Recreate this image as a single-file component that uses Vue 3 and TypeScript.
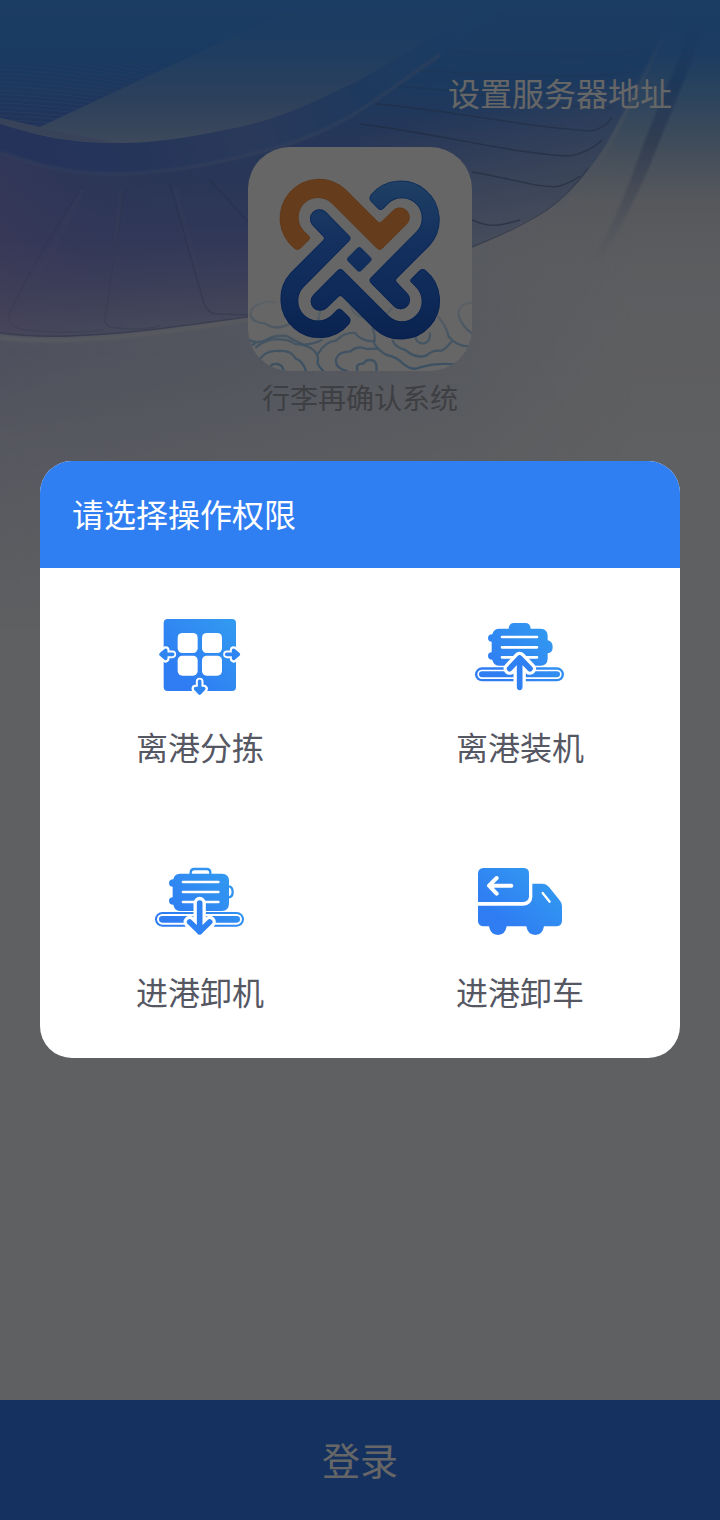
<script setup lang="ts">
type IconName = 'sort' | 'load' | 'unload' | 'truck'

interface Permission {
  icon: IconName
  label: string
}

const permissions: Permission[] = [
  { icon: 'sort', label: '离港分拣' },
  { icon: 'load', label: '离港装机' },
  { icon: 'unload', label: '进港卸机' },
  { icon: 'truck', label: '进港卸车' },
]

const meshLines: string[] = Array.from({ length: 22 }, (_, i) => {
  const y = 44 + i * 4.2
  return `M0 ${y} Q90 ${y + 4} 230 ${y + 40 - i}`
})
const meshRays: string[] = Array.from({ length: 24 }, (_, i) => {
  const x = -120 + i * 11
  return `M${x} 130 L${x + 190} 30`
})
</script>

<template>
  <div class="page">
    <svg class="scene" viewBox="0 0 720 640" aria-hidden="true">
      <defs>
        <linearGradient id="sky" x1="0" y1="0" x2="0" y2="640" gradientUnits="userSpaceOnUse">
          <stop offset="0" stop-color="#4496f8" />
          <stop offset="0.08" stop-color="#4696f2" />
          <stop offset="0.16" stop-color="#74ace8" />
          <stop offset="0.23" stop-color="#a4c0e2" />
          <stop offset="0.31" stop-color="#d6dbe6" />
          <stop offset="0.42" stop-color="#e5e8ee" />
          <stop offset="0.7" stop-color="#edeff3" />
          <stop offset="1" stop-color="#eef0f4" />
        </linearGradient>
        <linearGradient id="haze" x1="0" y1="0" x2="720" y2="0" gradientUnits="userSpaceOnUse">
          <stop offset="0" stop-color="#c4c8ea" />
          <stop offset="0.4" stop-color="#cbd3ea" stop-opacity="0.8" />
          <stop offset="0.65" stop-color="#d0d9ea" stop-opacity="0.6" />
          <stop offset="0.88" stop-color="#dfe3ee" stop-opacity="0" />
        </linearGradient>
        <linearGradient id="hazeFade" x1="0" y1="120" x2="0" y2="640" gradientUnits="userSpaceOnUse">
          <stop offset="0" stop-color="#fff" stop-opacity="0" />
          <stop offset="0.2" stop-color="#fff" stop-opacity="0.8" />
          <stop offset="0.45" stop-color="#fff" />
          <stop offset="0.66" stop-color="#fff" stop-opacity="0.45" />
          <stop offset="1" stop-color="#fff" stop-opacity="0" />
        </linearGradient>
        <mask id="hazeMask" maskUnits="userSpaceOnUse" x="0" y="0" width="720" height="640">
          <rect width="720" height="640" fill="url(#hazeFade)" />
        </mask>
        <linearGradient id="wing" x1="0" y1="0" x2="0" y2="336" gradientUnits="userSpaceOnUse">
          <stop offset="0" stop-color="#4496f8" />
          <stop offset="0.24" stop-color="#4590ec" />
          <stop offset="0.42" stop-color="#5f88dc" />
          <stop offset="0.54" stop-color="#6888da" />
          <stop offset="0.72" stop-color="#7c8edb" />
          <stop offset="0.86" stop-color="#9aa3dd" />
          <stop offset="1" stop-color="#bcc1e4" />
        </linearGradient>
        <linearGradient id="wingLeft" x1="0" y1="0" x2="300" y2="0" gradientUnits="userSpaceOnUse">
          <stop offset="0" stop-color="#a48cdc" stop-opacity="0.38" />
          <stop offset="0.45" stop-color="#7f80d8" stop-opacity="0.15" />
          <stop offset="1" stop-color="#7f80d8" stop-opacity="0" />
        </linearGradient>
        <linearGradient id="wingRight" x1="540" y1="90" x2="570" y2="220" gradientUnits="userSpaceOnUse">
          <stop offset="0" stop-color="#b4c6e2" stop-opacity="0" />
          <stop offset="1" stop-color="#b4c6e2" stop-opacity="0.85" />
        </linearGradient>
        <linearGradient id="ring" x1="0" y1="150" x2="470" y2="20" gradientUnits="userSpaceOnUse">
          <stop offset="0" stop-color="#5c7fe2" />
          <stop offset="0.25" stop-color="#5c84e2" />
          <stop offset="0.5" stop-color="#6a90e2" />
          <stop offset="0.75" stop-color="#4c90ea" />
          <stop offset="1" stop-color="#4496f8" />
        </linearGradient>
        <linearGradient id="disc" x1="0" y1="0" x2="0" y2="145" gradientUnits="userSpaceOnUse">
          <stop offset="0" stop-color="#4496f8" />
          <stop offset="0.35" stop-color="#4c98f0" />
          <stop offset="0.7" stop-color="#72a2e4" />
          <stop offset="1" stop-color="#9cb6e4" />
        </linearGradient>
        <linearGradient id="discDark" x1="0" y1="0" x2="0" y2="130" gradientUnits="userSpaceOnUse">
          <stop offset="0" stop-color="#4496f8" />
          <stop offset="0.45" stop-color="#4292f2" />
          <stop offset="1" stop-color="#547fde" />
        </linearGradient>
        <linearGradient id="meshFade" x1="0" y1="35" x2="0" y2="120" gradientUnits="userSpaceOnUse">
          <stop offset="0" stop-color="#fff" stop-opacity="0" />
          <stop offset="1" stop-color="#fff" />
        </linearGradient>
        <mask id="meshMask" maskUnits="userSpaceOnUse" x="0" y="0" width="320" height="140">
          <path d="M0 0H310L240 33 40 127 0 118Z" fill="url(#meshFade)" />
        </mask>
        <linearGradient id="beam" x1="0" y1="15" x2="0" y2="270" gradientUnits="userSpaceOnUse">
          <stop offset="0" stop-color="#3d8eee" stop-opacity="0" />
          <stop offset="0.25" stop-color="#4386de" />
          <stop offset="0.5" stop-color="#7692c6" />
          <stop offset="0.72" stop-color="#b2bed8" />
          <stop offset="1" stop-color="#cdd4e6" stop-opacity="0" />
        </linearGradient>
        <linearGradient id="rim" x1="0" y1="30" x2="0" y2="220" gradientUnits="userSpaceOnUse">
          <stop offset="0" stop-color="#7fb0f0" stop-opacity="0" />
          <stop offset="0.6" stop-color="#aec4e4" />
          <stop offset="1" stop-color="#dce0ee" />
        </linearGradient>
        <filter id="soft" x="-20%" y="-20%" width="140%" height="140%">
          <feGaussianBlur stdDeviation="1.2" />
        </filter>
      </defs>
      <rect width="720" height="640" fill="url(#sky)" />
      <g mask="url(#hazeMask)">
        <path d="M0 120H720V640H0Z" fill="url(#haze)" />
        <path d="M0 300H400V362L300 380 0 415Z" fill="url(#haze)" opacity="0.15" />
      </g>
      <path d="M0 0H680L663 33C648 70 625 112 607 143C590 170 575 188 547 210C524 225 500 236 472 247C390 288 310 309 248 317C180 327 130 335 67 337Q30 337 0 333Z" fill="url(#wing)" />
      <path d="M0 150L330 120 472 170 400 280 248 317C180 327 130 335 67 337Q30 337 0 333Z" fill="url(#wingLeft)" />
      <path d="M360 60H650C640 85 625 112 607 143C590 170 575 188 547 210C524 225 500 236 472 247L360 290Z" fill="url(#wingRight)" />
      <path
        d="M0 338Q30 341 67 340C130 338 180 330 248 320C310 312 390 291 474 250C500 238 526 226 549 212C578 190 593 172 609 145C626 112 648 70 663 33"
        fill="none" stroke="url(#rim)" stroke-width="4" filter="url(#soft)"
      />
      <path
        d="M0 333Q30 337 67 336C130 334 180 326 248 317M472 247C500 236 524 225 547 210Q572 192 588 168"
        fill="none" stroke="#6c7ba8" stroke-opacity="0.5" stroke-width="1.4"
      />
      <g fill="none" stroke="#4f6794" stroke-opacity="0.6" stroke-width="1.4">
        <path d="M360 124C440 134 520 155 570 156Q590 152 602 140" />
        <path d="M472 172C510 178 545 190 560 186Q572 182 580 176" />
        <path d="M472 220C490 228 500 226 520 220" />
        <path d="M376 104C450 110 530 128 590 131Q604 129 612 118" opacity="0.8" />
        <path d="M398 86C480 92 560 108 612 108" opacity="0.4" />
        <path d="M418 71C500 74 580 80 628 72" opacity="0.3" />
        <path d="M450 52C520 54 610 62 643 48" opacity="0.2" />
        <path d="M83 186Q40 250 10 312Q6 324 20 329Q60 335 104 330" opacity="0.25" />
        <path d="M125 190L105 318Q104 328 118 328Q140 331 160 326" opacity="0.3" />
        <path d="M170 184L203 300Q206 314 218 314L248 315" opacity="0.45" />
        <path d="M210 180L248 222" opacity="0.6" />
      </g>
      <g fill="none" stroke="#98a0dc" stroke-opacity="0.25" stroke-width="4" filter="url(#soft)">
        <path d="M82 190L52 250 12 315" />
        <path d="M121 190L112 290" />
        <path d="M175 188L200 280" />
      </g>
      <path
        d="M0 153C40 167 70 175 117 175C170 174 230 162 283 147C330 132 360 113 380 99L477 27 520 0H490L460 20C420 45 390 63 360 80C320 99 285 117 240 127C190 137 160 143 117 143C70 143 35 136 0 123Z"
        fill="url(#ring)"
      />
      <path d="M0 123C35 136 70 143 117 143C160 143 190 137 240 127C285 117 320 99 360 80C390 63 420 45 460 20L490 0H0Z" fill="url(#disc)" />
      <path d="M0 0H310L240 33 40 127 0 118Z" fill="url(#discDark)" />
      <g mask="url(#meshMask)" fill="none" stroke="#9ec1fb" stroke-width="0.7">
        <path v-for="line in meshLines" :key="line" :d="line" stroke-opacity="0.4" />
        <path v-for="ray in meshRays" :key="ray" :d="ray" stroke-opacity="0.13" />
      </g>
      <path d="M0 118L38 127 117 143Q60 143 0 124Z" fill="#8ca8e0" />
      <path d="M0 152C40 166 70 174 117 174C170 173 230 161 283 146C330 131 360 111 380 97L440 55" fill="none" stroke="#92a8e0" stroke-opacity="0.5" stroke-width="3" filter="url(#soft)" />
      <path d="M692 20L704 22C696 52 680 92 662 135C648 172 634 205 600 262L590 262C618 220 630 180 645 140C660 102 680 60 692 20Z" fill="url(#beam)" opacity="0.8" filter="url(#soft)" />
    </svg>

    <div class="server-link">设置服务器地址</div>

    <div class="brand">
      <svg class="app-logo" viewBox="24 21 672 672" aria-hidden="true">
        <defs>
          <linearGradient id="logoBlue" x1="0" y1="116" x2="0" y2="600" gradientUnits="userSpaceOnUse">
            <stop offset="0" stop-color="#50a0fa" />
            <stop offset="0.4" stop-color="#3179ee" />
            <stop offset="0.75" stop-color="#2468dc" />
            <stop offset="1" stop-color="#1955c4" />
          </linearGradient>
          <linearGradient id="waveFade" x1="0" y1="470" x2="0" y2="693" gradientUnits="userSpaceOnUse">
            <stop offset="0" stop-color="#a0cdf5" stop-opacity="0.15" />
            <stop offset="0.55" stop-color="#a0cdf5" stop-opacity="0.85" />
            <stop offset="1" stop-color="#94c8f7" />
          </linearGradient>
          <path id="hook" d="M163 325A117 117 0 1 1 317 149L413 245Q419 251 425 245L459 212A28.5 28.5 0 0 1 500 252L427 325Q419 333 411 325L276 190A59 59 0 1 0 192 274L207 289Q212 294 207 299L181 325Q172 333 163 325Z" />
          <path id="snake" d="M216 254A28.5 28.5 0 0 1 256 214L328 287Q335 295 328 303L192 440A59 59 0 1 0 276 524L290 510Q298 502 306 510L328 532Q335 540 328 552A117 117 0 1 1 151 399L250 300Q254 295 250 290Z" />
          <clipPath id="blueParts">
            <use href="#snake" />
            <use href="#snake" transform="rotate(180 360 358)" />
            <use href="#hook" transform="rotate(180 360 358)" />
            <rect x="329.5" y="329.5" width="57" height="57" rx="9" transform="rotate(45 358 358)" />
          </clipPath>
        </defs>
        <rect x="24" y="21" width="672" height="672" fill="#fff" />
        <g fill="none" stroke="url(#waveFade)" stroke-width="7" stroke-linecap="round" stroke-linejoin="round">
          <path d="M105 488Q85 480 60 492Q30 500 32 526Q38 548 75 550Q100 568 127 560Q152 552 168 538" />
          <path d="M24 598Q45 612 75 602Q100 584 140 588Q165 602 190 614Q225 612 245 600" />
          <path d="M26 622L46 610" />
          <path d="M48 622Q75 598 110 597Q150 598 165 612Q205 612 226 636Q238 650 232 668Q236 680 250 693" />
          <path d="M60 656Q80 630 118 633Q154 630 166 655Q188 662 198 693" />
          <path d="M90 682Q95 670 112 672Q130 676 130 693" />
          <path d="M235 640Q255 605 288 602Q315 575 345 579Q365 605 400 603" />
          <path d="M320 693Q284 684 288 658Q296 634 330 635Q352 615 380 627L412 626" />
          <path d="M352 690Q346 670 370 671Q380 655 400 662Q412 668 409 692" />
          <path d="M398 565Q408 590 402 610Q416 632 440 645Q470 650 490 672Q520 694 540 682Q590 668 645 673" />
          <path d="M458 602Q465 622 496 630Q530 658 560 646Q575 630 605 632Q620 624 634 606" />
          <path d="M526 588Q528 610 550 611Q572 606 570 580M595 530Q620 560 626 590Q650 618 690 620" />
          <path d="M695 487Q650 494 656 528Q668 562 696 580" />
          <path d="M240 512L235 540M330 490Q335 525 370 532M455 505Q440 525 425 530" />
        </g>
        <use href="#hook" fill="#ff9846" stroke="#e87a26" stroke-width="2" />
        <g clip-path="url(#blueParts)">
          <rect x="110" y="110" width="500" height="500" fill="url(#logoBlue)" />
          <g fill="none" stroke="#0048c8" stroke-opacity="0.5" stroke-width="5">
            <use href="#snake" />
            <use href="#snake" transform="rotate(180 360 358)" />
            <use href="#hook" transform="rotate(180 360 358)" />
          </g>
        </g>
      </svg>
      <div class="app-name">行李再确认系统</div>
    </div>

    <div class="login">登录</div>

    <div class="overlay">
      <section class="dialog">
        <header class="dialog-title">请选择操作权限</header>
        <div class="grid">
          <div v-for="item in permissions" :key="item.icon" class="cell">
            <svg v-if="item.icon === 'sort'" class="icon" viewBox="0 0 360 300">
              <defs>
                <linearGradient id="gSort" x1="70" y1="273" x2="288" y2="57" gradientUnits="userSpaceOnUse">
                  <stop offset="0.2" stop-color="#2f7cf3" />
                  <stop offset="1" stop-color="#329bf0" />
                </linearGradient>
              </defs>
              <rect x="71" y="57" width="217" height="216" rx="12" fill="url(#gSort)" />
              <g fill="#fff">
                <rect x="113" y="99" width="60" height="60" rx="14" />
                <rect x="186" y="99" width="60" height="60" rx="14" />
                <rect x="113" y="167" width="60" height="60" rx="14" />
                <rect x="186" y="167" width="60" height="60" rx="14" />
              </g>
              <g fill="#fff" stroke="#fff" stroke-width="23" stroke-linecap="round" stroke-linejoin="round">
                <path d="M66 163H97M77 150L63 163 77 176Z" />
                <path d="M292 163H261M281 150L295 163 281 176Z" />
                <path d="M179 277V245M166 266L179 279 192 266Z" />
              </g>
              <g fill="#2f86f2" stroke="#2f86f2" stroke-width="11" stroke-linecap="round" stroke-linejoin="round">
                <path d="M66 163H98M77 151L63 163 77 175Z" />
                <path d="M292 163H260M281 151L295 163 281 175Z" />
                <path d="M179 277V244M167 266L179 279 191 266Z" />
              </g>
            </svg>

            <svg v-else-if="item.icon === 'load'" class="icon" viewBox="0 0 360 300">
              <defs>
                <linearGradient id="gLoad" x1="90" y1="270" x2="270" y2="69" gradientUnits="userSpaceOnUse">
                  <stop offset="0.15" stop-color="#2f7cf3" />
                  <stop offset="1" stop-color="#329bf0" />
                </linearGradient>
              </defs>
              <g fill="url(#gLoad)">
                <path d="M146 86Q147 69 162 69H196Q211 69 212 86H242Q263 87 263 108V121Q278 124 278 141Q278 158 263 160V176Q262 196 242 197H116Q100 196 97 179Q84 179 84 168Q84 157 95 157V125Q84 125 84 114Q84 104 97 103Q101 87 116 86Z" />
                <rect x="45" y="202" width="267" height="42" rx="21" />
              </g>
              <rect x="54.500" y="211.500" width="248" height="23" rx="11.500" fill="none" stroke="#fff" stroke-width="5" />
              <path d="M126 111H231M126 142H231M126 172H231" stroke="#fff" stroke-width="8" stroke-linecap="round" />
              <path d="M179 262V174M149 206L179 174 210 206" fill="none" stroke="#fff" stroke-width="37" stroke-linecap="round" stroke-linejoin="round" />
              <path d="M179 262V174M149 206L179 174 210 206" fill="none" stroke="#2f80f2" stroke-width="17" stroke-linecap="round" stroke-linejoin="round" />
            </svg>

            <svg v-else-if="item.icon === 'unload'" class="icon" viewBox="0 -15 360 300">
              <defs>
                <linearGradient id="gUnload" x1="90" y1="255" x2="270" y2="54" gradientUnits="userSpaceOnUse">
                  <stop offset="0.15" stop-color="#2f7cf3" />
                  <stop offset="1" stop-color="#329bf0" />
                </linearGradient>
              </defs>
              <g fill="url(#gUnload)">
                <path d="M119 71H246Q267 72 267 92V162Q266 182 246 183H119Q103 182 100 164Q87 164 87 153Q87 142 98 142V110Q87 110 87 99Q87 89 100 88Q103 72 119 71Z" />
                <rect x="45" y="186" width="267" height="44" rx="22" />
              </g>
              <rect x="54" y="195" width="249" height="26" rx="13" fill="none" stroke="#fff" stroke-width="6" />
              <path d="M152 72V68Q152 57 163 57H200Q211 57 211 68V72M266 109Q278 110 278 126Q278 141 266 142" fill="none" stroke="url(#gUnload)" stroke-width="7" />
              <path d="M129 96H235M129 126H235M129 156H235" stroke="#fff" stroke-width="8" stroke-linecap="round" />
              <path d="M179 159V245M149 216L179 245 209 216" fill="none" stroke="#fff" stroke-width="37" stroke-linecap="round" stroke-linejoin="round" />
              <path d="M179 159V245M149 216L179 245 209 216" fill="none" stroke="#2f82f3" stroke-width="17" stroke-linecap="round" stroke-linejoin="round" />
            </svg>

            <svg v-else class="icon" viewBox="0 -15 360 300">
              <defs>
                <linearGradient id="gTruck" x1="90" y1="255" x2="260" y2="60" gradientUnits="userSpaceOnUse">
                  <stop offset="0.2" stop-color="#2f7cf3" />
                  <stop offset="1" stop-color="#329bf0" />
                </linearGradient>
              </defs>
              <g fill="url(#gTruck)">
                <path d="M70 54H192Q207 55 207 70V139Q206 155 190 156H54V70Q55 55 70 54Z" />
                <path d="M217 101H246Q259 101 267 111L300 152Q306 159 306 168V213Q305 228 291 229H252Q248 254 226 255Q203 254 199 229H140Q136 254 114 255Q91 254 87 229H69Q55 228 54 214V167H190Q215 166 217 142Z" />
              </g>
              <path d="M248 129L269 155" stroke="#fff" stroke-width="7" stroke-linecap="round" />
              <path d="M154 107H88M110 84L87 107 110 131" fill="none" stroke="#fff" stroke-width="12" stroke-linecap="round" stroke-linejoin="round" />
            </svg>
            <span class="label">{{ item.label }}</span>
          </div>
        </div>
      </section>
    </div>
  </div>
</template>

<style>
html,
body {
  margin: 0;
  background: #eef0f4;
}
</style>

<style scoped>
.page {
  position: relative;
  display: flex;
  flex-direction: column;
  width: 720px;
  height: 1520px;
  overflow: hidden;
  background: #eef0f4;
  font-family: 'Noto Sans CJK SC', sans-serif;
}

.scene {
  position: absolute;
  inset: 0 0 auto 0;
  width: 720px;
  height: 640px;
}

.server-link {
  position: relative;
  padding: 68px 48px 0 0;
  text-align: right;
  font-size: 32px;
  line-height: 48px;
  color: #fff;
}

.brand {
  position: relative;
  display: flex;
  flex-direction: column;
  align-items: center;
  margin-top: 31px;
}

.app-logo {
  width: 224px;
  height: 224px;
  border-radius: 42px;
}

.app-name {
  margin-top: 6px;
  font-size: 28px;
  line-height: 40px;
  color: #9c9da6;
}

.login {
  position: relative;
  margin-top: auto;
  height: 120px;
  background: #327bf0;
  color: #fff;
  font-size: 38px;
  line-height: 118px;
  text-align: center;
}

.overlay {
  position: absolute;
  inset: 0;
  display: flex;
  justify-content: center;
  align-items: flex-start;
  padding-top: 461px;
  background: rgba(0, 0, 0, 0.6);
}

.dialog {
  width: 640px;
  height: 597px;
  border-radius: 32px;
  overflow: hidden;
  background: #fff;
}

.dialog-title {
  height: 107px;
  padding-left: 32px;
  background: #2f7ef2;
  color: #fff;
  font-size: 32px;
  line-height: 104px;
}

.grid {
  display: grid;
  grid-template-columns: 320px 320px;
  grid-auto-rows: 245px;
}

.cell {
  display: flex;
  flex-direction: column;
  align-items: center;
  padding-top: 32px;
}

.icon {
  width: 120px;
  height: 100px;
}

.label {
  margin-top: 22px;
  font-size: 32px;
  line-height: 48px;
  color: #555763;
}
</style>
